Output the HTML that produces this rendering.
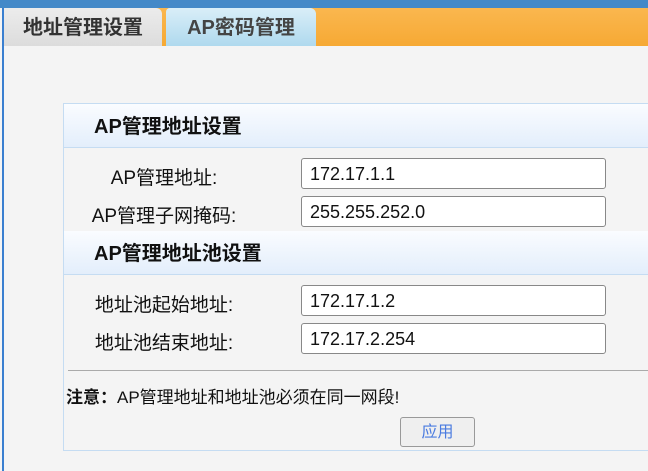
<!DOCTYPE html>
<html><head><meta charset="utf-8"><style>
body{margin:0;width:648px;height:471px;overflow:hidden;background:#f4f4f4;font-family:"Liberation Sans","Noto Sans CJK SC",sans-serif;position:relative}
.top{position:absolute;left:0;top:0;width:648px;height:8px;background:#4489c8}
.lb{position:absolute;left:2px;top:8px;width:2px;height:463px;background:#3a7fd0}
.tabs{position:absolute;left:4px;top:8px;width:644px;height:38px;background:linear-gradient(#fab74f,#f6a934)}
.t1{position:absolute;left:0;top:0;width:158px;height:38px;background:linear-gradient(#ececec,#dcdcdc);border-top-right-radius:6px;font-weight:bold;font-size:20px;color:#333;line-height:40px;text-align:center}
.t2{position:absolute;left:162px;top:0;width:150px;height:38px;background:linear-gradient(#d9eef8,#afd9ee);border-top-left-radius:4px;border-top-right-radius:6px;font-weight:bold;font-size:20px;color:#444;line-height:40px;text-align:center}
.panel{position:absolute;left:63px;top:103px;width:600px;height:346px;border:1px solid #c5dcf2;background:#f4f4f4}
.hd{position:absolute;left:0;width:600px;height:44px;background:linear-gradient(#fafcff,#e3eefb);border-bottom:1px solid #c5dcf2;font-weight:bold;font-size:20px;line-height:46px;padding-left:30px;box-sizing:border-box;color:#111}
.lab{position:absolute;font-size:19px;color:#111;text-align:center;width:200px;left:0px}
.in{position:absolute;left:237px;width:305px;height:31px;border:1px solid #888;border-radius:3px;background:#fff;font-size:18px;line-height:30px;padding-left:8px;box-sizing:border-box;color:#111}
.line{position:absolute;left:4px;top:266px;width:600px;height:1px;background:#aaa}
.note{position:absolute;left:2px;top:279px;font-size:17px;color:#111}
.btn{position:absolute;left:336px;top:313px;width:75px;height:30px;border:1px solid #999;border-radius:3px;background:#efefef;color:#4a7be0;font-size:16px;line-height:30px;text-align:center;box-sizing:border-box}
</style></head><body>
<div class="top"></div><div class="lb"></div>
<div class="tabs"><div class="t1">地址管理设置</div><div class="t2">AP密码管理</div></div>
<div class="panel">
<div class="hd" style="top:0">AP管理地址设置</div>
<div class="lab" style="top:59px">AP管理地址:</div><div class="in" style="top:54px">172.17.1.1</div>
<div class="lab" style="top:97px">AP管理子网掩码:</div><div class="in" style="top:92px">255.255.252.0</div>
<div class="hd" style="top:127px">AP管理地址池设置</div>
<div class="lab" style="top:186px">地址池起始地址:</div><div class="in" style="top:181px">172.17.1.2</div>
<div class="lab" style="top:224px">地址池结束地址:</div><div class="in" style="top:219px">172.17.2.254</div>
<div class="line"></div>
<div class="note"><b>注意：</b>AP管理地址和地址池必须在同一网段!</div>
<div class="btn">应用</div>
</div>
</body></html>
